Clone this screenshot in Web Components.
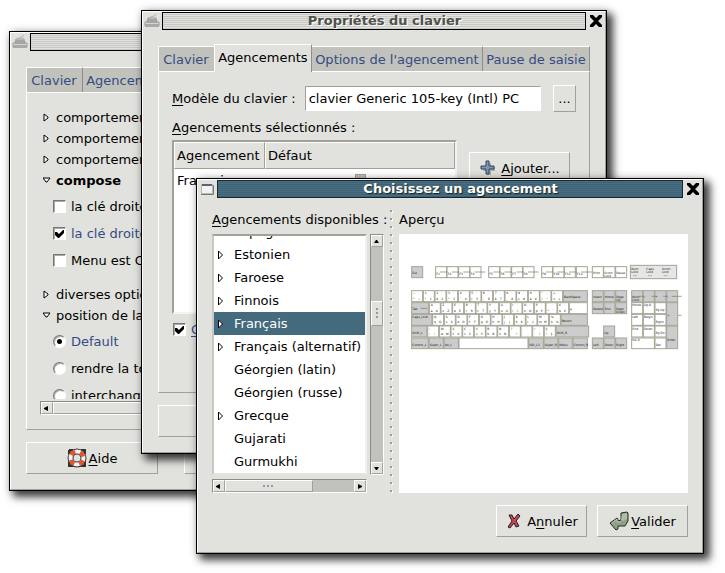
<!DOCTYPE html>
<html lang="fr">
<head>
<meta charset="utf-8">
<title>Propriétés du clavier</title>
<style>
  html, body { margin: 0; height: 100%; }
  body {
    background: #fff; color: #000; overflow: hidden;
    font: 13px/17px "DejaVu Sans", "Liberation Sans", sans-serif;
    --face: #e1e2dd; --dark: #a1a198; --trough: #c2c2bd; --link: #354b83; --select: #446a7e;
  }
  .desk { position: relative; min-height: 100%; }
  desk-window { position: absolute; }
  .back { left: 9px; right: 250px; top: 31px; }
  .middle { left: 141px; right: 118px; top: 10px; }
  .front { left: 196px; right: 21px; top: 178px; }
</style>
</head>
<body>
<main class="desk">
  <desk-window class="back" heading="Propriétés du clavier" icon="keyboard"><options-page></options-page></desk-window>
  <desk-window class="middle" heading="Propriétés du clavier" icon="keyboard"><layouts-page></layouts-page></desk-window>
  <desk-window class="front" heading="Choisissez un agencement" icon="window" active><layout-chooser></layout-chooser></desk-window>
</main>

<script>
const ICONS = {
  keyboard: '<svg width="16" height="16" viewBox="0 0 16 16"><path d="M6 5C6 3 11 4 12 1" fill="none" stroke="#aaa"/><path d="M4 5h8l1 4h2v4H1V9h2z" fill="#d5d5d2" stroke="#9b9b98"/><path d="M4 7h8M3 9h10" stroke="#777"/><path d="M1 11h14v3H1z" fill="#aaa9a5"/></svg>',
  window: '<svg width="16" height="16" viewBox="0 0 16 16"><path d="M2.500 3.500h11v9h-11z" fill="#f2f2f2" stroke="#b5b5b2"/><path d="M3 4h10" stroke="#56637a" stroke-width="2"/><path d="M2 13.500h12.500V4" fill="none" stroke="#777"/></svg>',
  close: '<svg width="14" height="14" viewBox="0 0 14 14"><path d="M3 3l9 9M12 3l-9 9" stroke="#999" stroke-width="3" opacity=".5"/><path d="M1 1h3l3 3 3-3h3v2L9 7l4 4v2h-3l-3-3-3 3H1v-2l4-4-4-4z" fill="#000"/></svg>',
  help: '<svg width="20" height="20" viewBox="0 0 20 20"><path d="M2 2h4M14 2h4v4M2 2v4M2 14v4h4M14 18h4v-4" fill="none" stroke="#333" stroke-width="2"/><circle cx="10" cy="10" r="6.500" fill="none" stroke="#333" stroke-width="6"/><circle cx="10" cy="10" r="6.500" fill="none" stroke="#f4f3f0" stroke-width="4"/><circle cx="10" cy="10" r="6.500" fill="none" stroke="#e8532b" stroke-width="4" stroke-dasharray="5 5.210" stroke-dashoffset="-2.600"/></svg>',
  add: '<svg width="18" height="18" viewBox="0 0 18 18"><path d="M7 3h4v4h4v4h-4v4H7v-4H3V7h4z" transform="translate(1 1)" fill="#777" opacity=".5"/><path d="M7 2h3v5h5v3h-5v5H7v-5H2V7h5z" fill="#7c96b5" stroke="#31435c"/></svg>',
  cancel: '<svg width="18" height="18" viewBox="0 0 18 18"><path d="M4 3h3l2 4 4-5 2 2-4 5 3 5-3 1-2-4-4 5-2-1 4-6z" fill="#c94455" stroke="#222"/></svg>',
  ok: '<svg width="20" height="20" viewBox="0 0 20 20"><path d="M12 2l6-1 1 1v8l-3 5H9v3l-2 1-6-7 7-5 1 1v2l3-1z" fill="#8fa184" stroke="#222d22"/><path d="M13 3l5-1v6l-4 2-2-1z" fill="#aebda3"/><path d="M3 12l5-4v3h4" fill="none" stroke="#b9c7ae"/></svg>',
  left: '<svg width="11" height="11" viewBox="0 0 11 11"><path d="M7 3v5L3 6V5z"/></svg>',
  right: '<svg width="11" height="11" viewBox="0 0 11 11"><path d="M4 3v5l4-2V5z"/></svg>',
  up: '<svg width="11" height="11" viewBox="0 0 11 11"><path d="M3 7h5L6 4H5z"/></svg>',
  down: '<svg width="11" height="11" viewBox="0 0 11 11"><path d="M3 4h5L6 7H5z"/></svg>',
  closed: '<svg width="8" height="9" viewBox="0 0 8 9"><path d="M1 1v7l4-3V4z" fill="#fff" stroke="#000"/></svg>',
  open: '<svg width="8" height="9" viewBox="0 0 8 9"><path d="M0 2h7L4 6H3z" fill="#fff" stroke="#000"/></svg>',
  node: '<svg width="8" height="10" viewBox="0 0 8 10"><path d="M1.500 1v8L5.500 5z" fill="#fff" stroke="#000"/></svg>'
};

const COMMON = `
  * { box-sizing: border-box; }
  button, input { font: inherit; color: inherit; margin: 0; }
  button { padding: 0; background: var(--face); border: 0; }
  svg { display: block; flex: none; }
  u { text-underline-offset: 2px; text-decoration-thickness: 1px; text-decoration-skip-ink: none; }
`;

class Part extends HTMLElement {
  connectedCallback() {
    if (this.shadowRoot) return;
    this.attachShadow({ mode: 'open' }).innerHTML = `<style>${COMMON}${this.css()}</style>${this.html()}`;
  }
  css() { return ''; }
  html() { return '<slot></slot>'; }
}

customElements.define('desk-window', class extends Part {
  css() { return `
    :host { display: block; border: 1px solid #000; background: var(--face);
      box-shadow: 5px 5px 8px 1px rgba(0,0,0,.72), 1px 1px 9px rgba(0,0,0,.22); }
    .frame { border: 1px solid; border-color: #fff var(--dark) var(--dark) #fff; padding-bottom: 15px; }
    header { display: flex; align-items: center; gap: 2px; padding: 0 2px 0 1px; }
    h1 { flex: 1; margin: 0; padding-left: 21px; height: 18px; font: bold 13px/16px "DejaVu Sans", sans-serif; text-align: center;
      border: 1px solid #000; color: #50524c; text-shadow: 1px 1px #fff;
      background: repeating-linear-gradient(#e1e2dd 0 1px, #c8c9c4 1px 2px); }
    :host([active]) h1 { color: #fff; border-color: #182630; text-shadow: 1px 1px 1px #122;
      background: repeating-linear-gradient(#4a6f82 0 1px, #3e6275 1px 2px); }
    header button { width: 14px; height: 14px; margin-left: 1px; }
    .body { padding: 0 15px; }`; }
  html() { return `<div class="frame"><header>${ICONS[this.getAttribute('icon')]}<h1>${this.getAttribute('heading')}</h1>
    <button aria-label="Fermer">${ICONS.close}</button></header><div class="body"><slot></slot></div></div>`; }
});

customElements.define('push-button', class extends Part {
  css() { return `
    :host { display: block; }
    button { width: 100%; height: 100%; min-height: 32px; display: flex; align-items: center; justify-content: center; gap: 2px;
      border: 1px solid; border-color: #fff var(--dark) var(--dark) #fff; }
    :host(:not([icon])) button { min-height: 27px; }
    :host([icon=cancel]) button, :host([icon=add]) button { gap: 4px; }`; }
  html() { return `<button ${this.hasAttribute('label') ? `aria-label="${this.getAttribute('label')}"` : ''}>${ICONS[this.getAttribute('icon')] || ''}<span><slot></slot></span></button>`; }
});

customElements.define('tab-strip', class extends Part {
  css() { return `
    :host { display: block; padding-top: 14px; }
    .tabs { display: flex; align-items: flex-end; min-height: 27px; }
    button { flex: 1 1 auto; height: 25px; padding: 0 3px; background: var(--trough); color: var(--link); white-space: nowrap;
      border: 1px solid; border-color: #fff #8f8f89 #8f8f89 transparent; border-width: 1px 1px 0 0; }
    button:first-child { border-left: 1px solid #fff; padding: 0 5px 0 4px; }
    button:has(+ .on) { border-right: 0; }
    button.on { height: 28px; margin-bottom: -1px; padding-bottom: 2px; background: var(--face); color: #000; border-left: 1px solid #fff; z-index: 1; }
    .pane { border: 1px solid; border-color: #fff var(--dark) var(--dark) #fff; }`; }
  html() {
    const on = this.getAttribute('current');
    return `<div class="tabs" role="tablist">${['Clavier', 'Agencements', "Options de l'agencement", 'Pause de saisie'].map(t =>
      `<button role="tab" aria-selected="${t === on}" class="${t === on ? 'on' : ''}">${t}</button>`).join('')}</div>
      <div class="pane"><slot></slot></div>`;
  }
});

customElements.define('choice-item', class extends Part {
  css() { return `
    :host { display: block; }
    label { display: flex; align-items: center; gap: 5px; white-space: nowrap; }
    input { appearance: none; width: 13px; height: 13px; background: #fff; flex: none; display: grid; place-items: center;
      border: 1px solid; border-color: #77776f #fff #fff #77776f; box-shadow: inset 1px 1px #aaa; }
    input[type=radio] { border-radius: 50%; }
    input[type=radio]:checked::after { content: ""; width: 5px; height: 5px; border-radius: 50%; background: #000; }
    input[type=checkbox]:checked::after { content: ""; width: 9px; height: 9px; background: #000;
      clip-path: polygon(0 3px, 2px 3px, 4px 5px, 8px 1px, 9px 1px, 9px 4px, 4px 9px, 3px 9px, 0 6px); }
    :host([checked]) label { color: var(--link); }`; }
  html() { return `<label><input type="${this.getAttribute('kind')}" name="c" ${this.hasAttribute('checked') ? 'checked' : ''}><span><slot></slot></span></label>`; }
});

customElements.define('scroll-bar', class extends Part {
  css() { return `
    :host { display: flex; border: 1px solid; border-color: #8b8b83 #fff #fff #8b8b83; background: var(--trough); }
    :host([vertical]) { flex-direction: column; width: 14px; }
    :host(:not([vertical])) { height: 14px; }
    button { width: 12px; height: 12px; flex: none; border: 1px solid; border-color: #fff var(--dark) var(--dark) #fff; }
    button svg { margin: -1px; }
    .before { flex: var(--before, 0); } .after { flex: var(--after, 1); }
    .thumb { flex: var(--thumb, 1); display: grid; place-items: center; background: var(--face); border: 1px solid; border-color: #fff var(--dark) var(--dark) #fff; }
    i { width: 11px; height: 3px; background: radial-gradient(circle at 1px 1px, #999 1px, transparent 1px) 0 0 / 4px 3px; }
    :host([vertical]) i { width: 3px; height: 11px; background-size: 3px 4px; }`; }
  html() {
    const v = this.hasAttribute('vertical');
    return `<button aria-label="${v ? 'Monter' : 'Gauche'}">${ICONS[v ? 'up' : 'left']}</button><div class="before"></div><div class="thumb"><i></i></div><div class="after"></div><button aria-label="${v ? 'Descendre' : 'Droite'}">${ICONS[v ? 'down' : 'right']}</button>`;
  }
});

customElements.define('option-group', class extends Part {
  css() { return `
    :host { display: block; }
    button { display: flex; align-items: center; gap: 5px; height: 21px; background: none; white-space: nowrap; }
    :host([bold]) button { font-weight: bold; }
    div { display: grid; grid-auto-rows: 27px; align-items: center; padding: 2px 0 10px 10px; }`; }
  html() {
    const open = this.hasAttribute('open');
    return `<button aria-expanded="${open}">${ICONS[open ? 'open' : 'closed']}<span>${this.getAttribute('heading')}</span></button>${open ? '<div><slot></slot></div>' : ''}`;
  }
});

customElements.define('options-page', class extends Part {
  css() { return `
    :host { display: block; }
    .inner { padding: 14px 13px; }
    .view { max-height: 292px; overflow: hidden; padding-left: 3px; }
    scroll-bar { margin-top: 2px; --thumb: 3; --after: 1; }
    .actions { display: grid; grid-template-columns: 132px 132px; gap: 26px; margin-top: 12px; }`; }
  html() { return `<tab-strip current=""><div class="inner"><div class="view">
    <option-group heading="comportement"></option-group>
    <option-group heading="comportement"></option-group>
    <option-group heading="comportement"></option-group>
    <option-group heading="compose" open bold>
      <choice-item kind="checkbox">la clé droite</choice-item>
      <choice-item kind="checkbox" checked>la clé droite</choice-item>
      <choice-item kind="checkbox">Menu est Compose</choice-item>
    </option-group>
    <option-group heading="diverses options"></option-group>
    <option-group heading="position de la touche" open>
      <choice-item kind="radio" checked>Default</choice-item>
      <choice-item kind="radio">rendre la touche</choice-item>
      <choice-item kind="radio">interchanger</choice-item>
    </option-group>
    </div><scroll-bar></scroll-bar></div></tab-strip>
    <div class="actions"><push-button icon="help"><u>A</u>ide</push-button><push-button label="Fermer"></push-button></div>`; }
});

customElements.define('layouts-page', class extends Part {
  css() { return `
    :host { display: block; }
    .inner { padding: 13px 13px 0; min-height: 320px; }
    .model { display: grid; grid-template-columns: auto minmax(0, 1fr) 23px; gap: 12px; align-items: center; }
    label { white-space: nowrap; margin-right: -3px; }
    input[type=text] { width: 100%; height: 25px; padding: 0 3px; background: #fff; outline: 0; border: 1px solid; border-color: var(--dark) #fff #fff var(--dark); }
    .model push-button { height: 27px; }
    .lists { display: flex; gap: 12px; }
    .box { flex: 1; height: 174px; background: #fff; border: 2px solid; border-color: var(--dark) #f4f4f2 #f4f4f2 var(--dark); overflow: hidden; }
    table { width: 100%; border-collapse: separate; border-spacing: 0; table-layout: fixed; }
    th { height: 27px; padding: 0 2px; font-weight: normal; text-align: left; background: var(--face); border: 1px solid; border-color: #fff var(--dark) var(--dark) #fff; }
    th:first-child { width: 91px; }
    td { padding: 3px; height: 23px; }
    td input { display: block; margin: 0 auto; width: 11px; height: 13px; appearance: none; border: 1px solid var(--dark); background: var(--trough); }
    h2 { margin: 7px 0 4px; font: inherit; }
    .side { width: 107px; padding: 12px 6px 0 0; }
    choice-item { margin: 7px 1px 0; }
    .actions { margin-top: 12px; width: 132px; height: 32px; }
    .actions push-button { height: 100%; }`; }
  html() { return `<tab-strip current="Agencements"><div class="inner">
    <div class="model"><label for="model"><u>M</u>odèle du clavier :</label>
      <input id="model" type="text" value="clavier Generic 105-key (Intl) PC"><push-button label="Choisir un modèle">...</push-button></div>
    <h2><u>A</u>gencements sélectionnés :</h2>
    <div class="lists"><div class="box"><table><thead><tr><th>Agencement</th><th>Défaut</th></tr></thead>
      <tbody><tr><td>Français</td><td><input type="radio" aria-label="Défaut"></td></tr></tbody></table></div>
      <div class="side"><push-button icon="add"><u>A</u>jouter...</push-button></div></div>
    <choice-item kind="checkbox" checked><u>G</u>roupe</choice-item>
    </div></tab-strip><div class="actions"><push-button label="Aide"></push-button></div>`; }
});

customElements.define('layout-list', class extends Part {
  css() { return `
    :host { display: flex; flex-direction: column; justify-content: flex-end; overflow: hidden; background: #fff;
      border: 2px solid; border-color: var(--dark) #f0f0ed #e4e4e0 #c8c8c2; }
    ul { margin: 0; padding: 0; list-style: none; }
    li { display: flex; align-items: center; gap: 9px; height: 23px; padding-left: 3px; white-space: nowrap; }
    li button { width: 8px; height: 10px; background: none; }
    li.none { padding-left: 20px; }
    li.sel { background: var(--select); color: #fff; }`; }
  html() {
    const rows = [['Espagnol', 1], ['Estonien', 1], ['Faroese', 1], ['Finnois', 1], ['Français', 1], ['Français (alternatif)', 1],
      ['Géorgien (latin)'], ['Géorgien (russe)'], ['Grecque', 1], ['Gujarati'], ['Gurmukhi']];
    return `<ul>${rows.map(([t, kids]) => `<li class="${t === 'Français' ? 'sel' : ''} ${kids ? '' : 'none'}">${kids ? `<button aria-label="Développer">${ICONS.node}</button>` : ''}<span>${t}</span></li>`).join('')}</ul>`;
  }
});

customElements.define('keyboard-preview', class extends Part {
  css() { return `
    :host { display: block; background: #fff; padding: 30px 5px 0 11px; }
    svg { width: 272px; max-width: 100%; }
    rect { stroke: #a3a394; stroke-width: 3; }
    text { font: 9px "DejaVu Sans", sans-serif; fill: #111; }`; }
  html() {
    let out = '';
    const key = (x, y, w, h, label = '', gray = false, ty = 24) => {
      out += `<rect x="${x + 1}" y="${y + 1}" width="${w - 2}" height="${h - 2}" fill="${gray ? '#ccc' : '#fff'}"/>`;
      label.split('|').forEach((line, i) => { if (line) out += `<text x="${x + 3}" y="${y + ty + i * 9}">${line}</text>`; });
    };
    const glyph = (x, y, top, low) => {
      key(x, y, 35, 35);
      out += `<text x="${x + 5}" y="${y + 12}">${top}</text><text x="${x + 5}" y="${y + 28}">${low}</text><text x="${x + 20}" y="${y + 12}">·</text><text x="${x + 20}" y="${y + 28}">${top}</text>`;
    };
    key(34, 34, 35, 35, 'Esc', true);
    [106, 140, 175, 209, 265, 299, 334, 368, 424, 458, 492, 528].forEach((x, i) => key(x, 34, 35, 35, 'F' + (i + 1), false, 25));
    out += '<path d="M120 51h22M155 51h22M190 51h22M224 51h32M280 51h22M314 51h22M350 51h22M384 51h32M438 51h22M472 51h22M508 51h22M544 51h32" stroke="#777" stroke-width="2"/>';
    key(576, 34, 35, 35, 'Print'); key(610, 34, 36, 35, 'Scroll|Lock'); key(646, 34, 35, 35, 'Pause');
    out += '<rect x="691" y="31" width="139" height="40" fill="#e6e6e6"/>';
    [['Num', 694], ['Caps', 739], ['Scroll', 786]].forEach(([t, x]) => out += `<text x="${x}" y="44">${t}</text><text x="${x}" y="54">Lock</text><path d="M${x + 5} 62h12" stroke="#998" stroke-width="2"/>`);
    const row = (x, y, tops, lows) => [...tops].forEach((c, i) => glyph(x + i * 35, y, c, lows[i]));
    row(34, 106, '~1234567890°+', '²¹é"\'(-è_çà)=');
    key(489, 106, 74, 35, 'BackSpace', true);
    key(34, 142, 53, 35, 'Tab', true); out += '<path d="M62 160h20" stroke="#777" stroke-width="2"/>';
    row(87, 142, 'AZERTYUIOP¨£', 'azertyuiop^$'); key(507, 142, 56, 35, 'µ');
    key(34, 177, 63, 35, 'Caps_Lock', true, 11);
    row(97, 177, 'QSDFGHJKLM%', 'qsdfghjklmù'); key(482, 177, 81, 35, 'Return', true);
    key(34, 212, 48, 35, 'Shift_L', true);
    row(82, 212, '›WXCVBN?./§', '‹wxcvbn,;:!'); key(467, 212, 100, 35, 'Shift_R', true);
    [[34, 52, 'Control_L'], [86, 45, 'Super_L'], [131, 45, 'Alt_L'], [385, 46, 'ISO_L3'], [431, 44, 'Super_R'], [475, 43, 'Menu'], [518, 45, 'Control_R']]
      .forEach(([x, w, t]) => key(x, 248, w, 34, t, true));
    key(176, 248, 209, 34);
    [['Insert', 'Home', 'Page|Up'], ['Delete', 'End', 'Page|Down']].forEach((r, j) => r.forEach((t, i) => key(576 + i * 35, 106 + j * 36, 35, 35, t, true)));
    key(610, 212, 35, 35, 'Up', true);
    ['Left', 'Down', 'Right'].forEach((t, i) => key(576 + i * 35, 248, 35, 34, t, true));
    ['Num|Lock', '/', '*', '-'].forEach((t, i) => key(694 + i * 35, 106, 35, 36, t, true));
    out += '<path d="M715 124h16M755 124h16M790 124h14M815 124h30M815 181h30" stroke="#777" stroke-width="2"/>';
    [['Home', 'Up 8', 'Pg Up'], ['Left', 'Begin', 'Right'], ['End', 'Down', 'Pg Dn']].forEach((r, j) => r.forEach((t, i) => key(694 + i * 35, 142 + j * 35, 35, 35, t, false, i === 2 ? 26 : 12)));
    key(799, 142, 35, 70, '+', true, 42); key(799, 212, 35, 70, 'Enter', true, 46);
    key(694, 248, 70, 34, 'Ins      0', false, 11); key(764, 248, 35, 34, 'Del');
    return `<svg viewBox="30 27 816 258" role="img" aria-label="Aperçu du clavier">${out}</svg>`;
  }
});

customElements.define('layout-chooser', class extends Part {
  css() { return `
    :host { display: block; padding-top: 12px; margin: 0 -1px; color: #000; }
    .split { display: grid; grid-template-columns: 172px 7px minmax(0, 1fr); gap: 4px; }
    .pick, .show { display: flex; flex-direction: column; }
    h2 { margin: 0; height: 24px; line-height: 21px; font: inherit; padding-top: 1px; white-space: nowrap; }
    .area { display: grid; grid-template-columns: 155px 14px; gap: 3px; height: 241px; }
    layout-list { min-height: 0; }
    .pick > scroll-bar { width: 155px; --thumb: 87; --after: 42; margin-top: 4px; }
    .area scroll-bar { --before: 54; --thumb: 24; --after: 137; }
    .grip { justify-self: center; width: 3px; height: 283px;
      background: radial-gradient(circle at 1px 1px, #9a9a93 1px, transparent 1px) 0 0 / 3px 8px, radial-gradient(circle at 2px 2px, #fff 1px, transparent 1px) 0 0 / 3px 8px; }
    keyboard-preview { flex: 1; }
    .actions { display: flex; justify-content: flex-end; gap: 10px; margin-top: 12px; }
    .actions push-button { width: 91px; }`; }
  html() { return `<div class="split"><section class="pick"><h2><u>A</u>gencements disponibles :</h2>
      <div class="area"><layout-list></layout-list><scroll-bar vertical></scroll-bar></div><scroll-bar></scroll-bar></section>
    <div class="grip"></div>
    <section class="show"><h2>Aperçu</h2><keyboard-preview></keyboard-preview></section></div>
    <div class="actions"><push-button icon="cancel">A<u>n</u>nuler</push-button><push-button icon="ok"><u>V</u>alider</push-button></div>`; }
});
</script>
</body>
</html>
